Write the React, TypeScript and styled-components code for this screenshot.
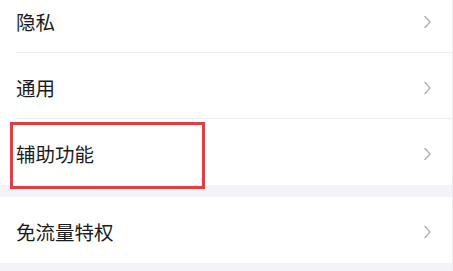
import styled, { createGlobalStyle } from 'styled-components';

const Global = createGlobalStyle`
    html, body {
        margin: 0;
        padding: 0;
        background: #f4f4f8;
    }
    body {
        font-family: 'Noto Sans CJK SC', 'Noto Sans', sans-serif;
        overflow: hidden;
    }
`;

const Page = styled.div`
    width: 452px;
    height: 271px;
    border-right: 1px solid #ececf0;
    overflow: hidden;
    background: #f4f4f8;
`;

// list is scrolled a little, first row is cut off at the top
const Scroll = styled.div`
    margin-top: -13px;
    display: flex;
    flex-direction: column;
`;

const Group = styled.div<{ gap?: string }>`
    display: flex;
    flex-direction: column;
    background: #ffffff;
    margin-bottom: ${(props) => props.gap || '0'};
`;

const Row = styled.div<{ last?: boolean }>`
    position: relative;
    height: 66px;
    display: flex;
    align-items: center;
    justify-content: space-between;
    padding: 0 20px 0 16px;
    &::after {
        content: '';
        display: ${(props) => (props.last ? 'none' : 'block')};
        position: absolute;
        left: 16px;
        right: 0;
        bottom: 0;
        height: 1px;
        background: #ededf0;
    }
`;

const Label = styled.span`
    font-size: 19.5px;
    line-height: 1;
    color: #1b1b1d;
    margin-top: 3px;
`;

const Mark = styled.div`
    position: absolute;
    left: 10px;
    top: 3px;
    width: 189px;
    height: 61px;
    border: 3px solid #e43c40;
    pointer-events: none;
    z-index: 1;
`;

const Chevron = () => (
    <svg width="9" height="14" viewBox="0 0 9 14" style={{ marginTop: 3 }}>
        <path d="M2 1.5 L7 7 L2 12.5" fill="none" stroke="#b4b4ba" strokeWidth="1.6" strokeLinecap="round" strokeLinejoin="round" />
    </svg>
);

interface ItemProps {
    text: string;
    last?: boolean;
    marked?: boolean;
}

const Item = ({ text, last, marked }: ItemProps) => (
    <Row last={last}>
        <Label>{text}</Label>
        <Chevron />
        {marked && <Mark />}
    </Row>
);

export default function App() {
    return (
        <Page>
            <Global />
            <Scroll>
                <Group gap="12px">
                    <Item text="隐私" />
                    <Item text="通用" />
                    <Item text="辅助功能" last marked />
                </Group>
                <Group gap="12px">
                    <Item text="免流量特权" last />
                </Group>
            </Scroll>
        </Page>
    );
}
